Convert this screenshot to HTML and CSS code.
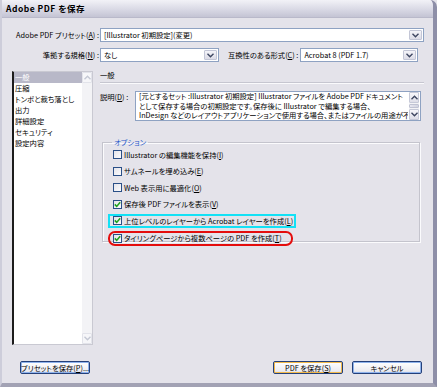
FILE: index.html
```html
<!DOCTYPE html>
<html lang="ja">
<head>
    <meta charset="UTF-8">
    <title>Adobe PDF を保存</title>
    <link rel="stylesheet" href="styles.css">
</head>
<body>

<div class="window">
    <div class="titlebar">Adobe PDF を保存</div>

    <div class="dialog">
        <!-- Preset row -->
        <div class="field-row">
            <label class="field-label">Adobe PDF プリセット(<u>A</u>) :</label>
            <div class="combo combo-preset">
                <span class="combo-value">[Illustrator 初期設定](変更)</span>
                <span class="combo-arrow"><svg width="7" height="5" viewBox="0 0 7 5"><path d="M0.5 0.8 L3.5 3.8 L6.5 0.8" fill="none" stroke="#3d4660" stroke-width="1.4"/></svg></span>
            </div>
        </div>

        <!-- Standard / compatibility row -->
        <div class="field-row">
            <label class="field-label">準拠する規格(<u>N</u>) :</label>
            <div class="combo combo-standard">
                <span class="combo-value">なし</span>
                <span class="combo-arrow"><svg width="7" height="5" viewBox="0 0 7 5"><path d="M0.5 0.8 L3.5 3.8 L6.5 0.8" fill="none" stroke="#3d4660" stroke-width="1.4"/></svg></span>
            </div>
            <label class="field-label-compat">互換性のある形式(<u>C</u>) :</label>
            <div class="combo combo-compat">
                <span class="combo-value">Acrobat 8 (PDF 1.7)</span>
                <span class="combo-arrow"><svg width="7" height="5" viewBox="0 0 7 5"><path d="M0.5 0.8 L3.5 3.8 L6.5 0.8" fill="none" stroke="#3d4660" stroke-width="1.4"/></svg></span>
            </div>
        </div>

        <div class="main">
            <!-- Category list -->
            <div class="nav-list">
                <ul class="nav-items">
                    <li class="selected">一般</li>
                    <li>圧縮</li>
                    <li>トンボと裁ち落とし</li>
                    <li>出力</li>
                    <li>詳細設定</li>
                    <li>セキュリティ</li>
                    <li>設定内容</li>
                </ul>
                <div class="vscroll vscroll-disabled">
                    <span class="scroll-btn"><svg width="7" height="5" viewBox="0 0 7 5"><path d="M0.5 4.2 L3.5 1.2 L6.5 4.2" fill="none" stroke="#c4c8d4" stroke-width="1.4"/></svg></span>
                    <span class="scroll-track"></span>
                    <span class="scroll-btn"><svg width="7" height="5" viewBox="0 0 7 5"><path d="M0.5 0.8 L3.5 3.8 L6.5 0.8" fill="none" stroke="#c4c8d4" stroke-width="1.4"/></svg></span>
                </div>
            </div>

            <!-- General panel -->
            <div class="panel">
                <div class="panel-title">一般</div>

                <div class="desc-row">
                    <label class="desc-label">説明(<u>D</u>) :</label>
                    <div class="desc-box">
                        <div class="desc-text">
                            <div class="desc-line">[元とするセット :Illustrator 初期設定] Illustrator ファイルを Adobe PDF ドキュメント</div>
                            <div class="desc-line">として保存する場合の初期設定です。保存後に Illustrator で編集する場合、</div>
                            <div class="desc-line">InDesign などのレイアウトアプリケーションで使用する場合、またはファイルの用途が不明</div>
                        </div>
                        <div class="vscroll">
                            <span class="scroll-btn"><svg width="7" height="5" viewBox="0 0 7 5"><path d="M0.5 4.2 L3.5 1.2 L6.5 4.2" fill="none" stroke="#3d4660" stroke-width="1.4"/></svg></span>
                            <span class="scroll-thumb"></span>
                            <span class="scroll-btn"><svg width="7" height="5" viewBox="0 0 7 5"><path d="M0.5 0.8 L3.5 3.8 L6.5 0.8" fill="none" stroke="#3d4660" stroke-width="1.4"/></svg></span>
                        </div>
                    </div>
                </div>

                <fieldset class="options">
                    <legend>オプション</legend>
                    <div class="option"><span class="check"></span>Illustrator の編集機能を保持(<u>I</u>)</div>
                    <div class="option"><span class="check"></span>サムネールを埋め込み(<u>E</u>)</div>
                    <div class="option"><span class="check"></span>Web 表示用に最適化(<u>O</u>)</div>
                    <div class="option"><span class="check checked"><svg width="7" height="7" viewBox="0 0 7 7"><path d="M0.8 3.4 L2.7 5.4 L6.2 1.2" fill="none" stroke="#21a221" stroke-width="1.6"/></svg></span>保存後 PDF ファイルを表示(<u>V</u>)</div>
                    <div class="option option-cyan"><span class="check checked"><svg width="7" height="7" viewBox="0 0 7 7"><path d="M0.8 3.4 L2.7 5.4 L6.2 1.2" fill="none" stroke="#21a221" stroke-width="1.6"/></svg></span>上位レベルのレイヤーから Acrobat レイヤーを作成(<u>L</u>)</div>
                    <div class="option option-red"><span class="check checked"><svg width="7" height="7" viewBox="0 0 7 7"><path d="M0.8 3.4 L2.7 5.4 L6.2 1.2" fill="none" stroke="#21a221" stroke-width="1.6"/></svg></span>タイリングページから複数ページの PDF を作成(<u>T</u>)</div>
                </fieldset>
            </div>
        </div>

        <!-- Buttons -->
        <div class="button-row">
            <button class="btn btn-focus">プリセットを保存(<u>P</u>)...</button>
            <div class="button-group">
                <button class="btn btn-default">PDF を保存(<u>S</u>)</button>
                <button class="btn btn-focus">キャンセル</button>
            </div>
        </div>
    </div>
</div>

</body>
</html>
```

FILE: styles.css
```css
body {
    margin: 0;
    padding: 0;
    background-color: #e4e3ea;
    font-family: "Noto Sans CJK JP", "Noto Sans", sans-serif;
    font-size: 7.3px;
    font-feature-settings: "palt";
    color: #000;
}
u {
    text-decoration-thickness: 1px;
    text-underline-offset: 1px;
}
.window {
    width: 437px;
    box-sizing: border-box;
    background-color: #e4e3ea;
    border-left: 2px solid #cdcdda;
    border-right: 4px solid #8e8fa8;
    border-bottom: 4px solid #a2a2b4;
    border-top-right-radius: 7px;
    overflow: hidden;
}
.titlebar {
    height: 17px;
    line-height: 17px;
    padding-left: 4px;
    font-size: 8.5px;
    font-weight: bold;
    letter-spacing: 0.5px;
    background: linear-gradient(#f2f2f7, #d9d9e5 55%, #c4c4d4);
    border-bottom: 1px solid #b9b9ca;
}
.dialog {
    padding: 10px 9px 9px 10px;
}
.field-row {
    display: flex;
    align-items: center;
    height: 14px;
    margin-bottom: 6px;
}
.field-label {
    width: 87px;
    margin-right: 1px;
    text-align: right;
    white-space: nowrap;
}
.field-label-compat {
    margin-left: 9px;
    margin-right: 2px;
    white-space: nowrap;
}
.combo {
    display: flex;
    align-items: stretch;
    height: 14px;
    box-sizing: border-box;
    background-color: #fff;
    border: 1px solid #8ea2c2;
}
.combo-preset {
    width: 324px;
}
.combo-standard {
    width: 119px;
}
.combo-compat {
    width: 118px;
}
.combo-value {
    flex: 1;
    padding-left: 3px;
    line-height: 12px;
    white-space: nowrap;
    overflow: hidden;
}
.combo-arrow {
    width: 11px;
    margin: 1px;
    display: flex;
    align-items: center;
    justify-content: center;
    background: linear-gradient(#f4f4f9, #dcdce7);
    border: 1px solid #c3c6d6;
    border-radius: 1px;
}
.main {
    display: flex;
    margin-top: 9px;
    height: 274px;
}
.nav-list {
    width: 81px;
    box-sizing: border-box;
    display: flex;
    background-color: #fff;
    border: 1px solid #c9c9d2;
    border-left: 2px solid #1c1c1c;
}
.nav-items {
    flex: 1;
    list-style: none;
    margin: 0;
    padding: 0;
}
.nav-items li {
    height: 11px;
    line-height: 11px;
    padding-left: 1px;
    white-space: nowrap;
}
.nav-items li.selected {
    background-color: #b8b8c8;
    color: #fff;
}
.vscroll {
    width: 10px;
    display: flex;
    flex-direction: column;
    background-color: #f3f3f6;
}
.scroll-btn {
    height: 9px;
    display: flex;
    align-items: center;
    justify-content: center;
    background: linear-gradient(#f7f7fb, #dedee8);
    border: 1px solid #c6c9d8;
    border-radius: 1px;
}
.vscroll-disabled .scroll-btn {
    background: #f6f6f9;
    border-color: #e2e3ea;
}
.scroll-track {
    flex: 1;
}
.scroll-thumb {
    flex: 1;
    margin: 1px 0;
    background: linear-gradient(90deg, #e6e6ef, #d2d3e0);
    border: 1px solid #c0c3d3;
    border-radius: 1px;
}
.panel {
    flex: 1;
    margin-left: 7px;
    display: flex;
    flex-direction: column;
}
.panel-title {
    height: 11px;
    line-height: 11px;
    margin-top: -1px;
    padding-bottom: 1px;
    border-bottom: 1px solid #c6c6d0;
    box-shadow: 0 1px 0 #fafafc;
}
.desc-row {
    display: flex;
    margin-top: 8px;
}
.desc-label {
    width: 35px;
    padding-top: 1px;
    white-space: nowrap;
}
.desc-box {
    width: 286px;
    height: 30px;
    box-sizing: border-box;
    display: flex;
    background-color: #fff;
    border: 1px solid #8ea2c2;
}
.desc-text {
    flex: 1;
    overflow: hidden;
    padding: 0 0 0 3px;
}
.desc-line {
    height: 9.5px;
    line-height: 9.5px;
    white-space: nowrap;
    overflow: hidden;
}
.desc-box .vscroll {
    margin: 0 1px 0 1px;
}
.options {
    margin: 17px 4px 0 2px;
    padding: 1px 0 0 5px;
    height: 104px;
    box-sizing: border-box;
    border: 1px solid #c4c4cd;
    box-shadow: inset 1px 1px 0 #fbfbfd, 1px 1px 0 #fbfbfd;
}
.options legend {
    margin-left: 4px;
    padding: 0 2px;
    color: #1d57c9;
    line-height: 9px;
}
.option {
    display: flex;
    align-items: center;
    width: fit-content;
    height: 13.5px;
    box-sizing: border-box;
    margin-bottom: 3px;
    padding: 0 3px 0 3px;
    border: 2px solid transparent;
    white-space: nowrap;
}
.option-cyan {
    border-color: #13e1f5;
    padding-right: 1px;
}
.option-red {
    border-color: #e40d0d;
    border-radius: 7px;
    height: 15px;
    margin-top: 3px;
    padding-right: 9px;
}
.check {
    width: 9px;
    height: 9px;
    box-sizing: border-box;
    margin-right: 2px;
    display: flex;
    align-items: center;
    justify-content: center;
    background: linear-gradient(135deg, #e4e4ea, #fbfbfd);
    border: 1px solid #2a4f87;
}
.button-row {
    display: flex;
    justify-content: space-between;
    margin-top: 16px;
    padding-left: 8px;
    padding-right: 2px;
}
.button-group {
    display: flex;
    gap: 9px;
}
.btn {
    width: 70px;
    height: 13px;
    padding: 0;
    font-family: inherit;
    font-size: 7.3px;
    font-feature-settings: "palt";
    line-height: 10px;
    white-space: nowrap;
    color: #000;
    background: linear-gradient(#ffffff, #ececf1 80%, #d8d8e2);
    border: 1px solid #24407a;
    border-radius: 2px;
}
.btn-focus {
    box-shadow: inset 0 0 0 1px #8fb3ec;
}
.btn-default {
    box-shadow: inset 0 0 0 1px #f2b94a;
}
```
